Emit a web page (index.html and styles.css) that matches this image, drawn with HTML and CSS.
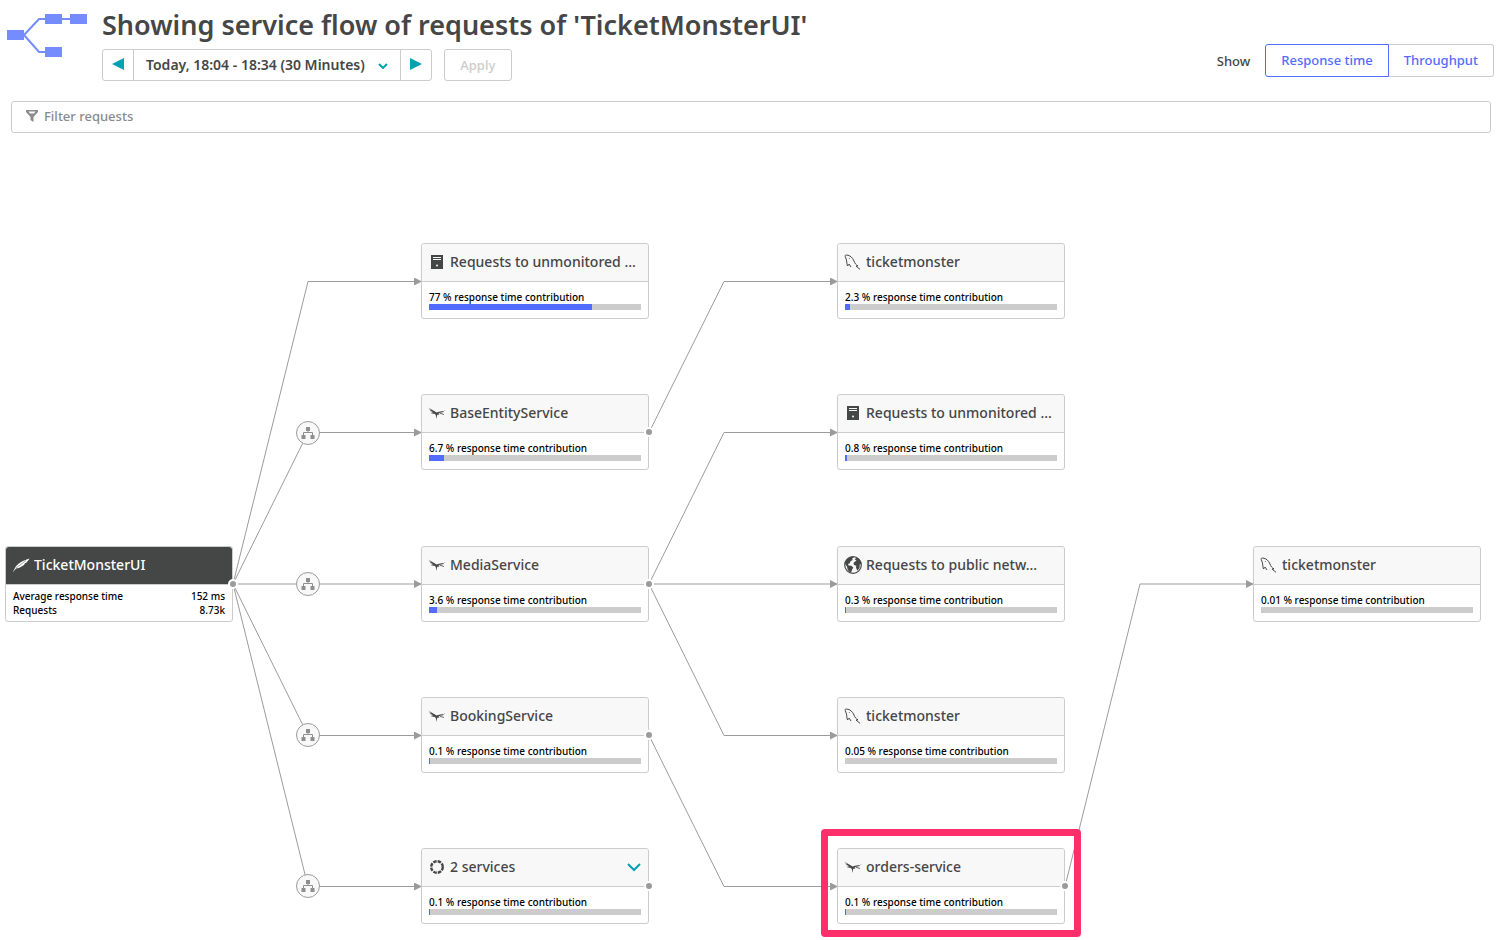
FILE: index.html
```html
<!DOCTYPE html>
<html lang="en">
<head>
<meta charset="utf-8">
<title>Service flow</title>
<link rel="stylesheet" href="styles.css">
</head>
<body>
<svg class="sprite" aria-hidden="true">
  <symbol id="i-server" viewBox="0 0 18 18"><path fill="#454646" d="M3 2h12v14H3z"/><path stroke="#f8f8f8" d="M5 4.500h8M5 6.500h8"/><circle cx="9" cy="12.500" r="1" fill="#f8f8f8"/></symbol>
  <symbol id="i-bird" viewBox="0 0 18 18"><path fill="#454646" d="M0 3.500L7 7.500l1.500 1L11 7.800l7-1.300-3.500 1.300 1.500.3-4 .7-1.500 1 1 1.200-1.700-.6-.8 1-.5 3.600L7.800 11 6.500 9.800 2.500 10l3-.9L2 7.800l2.700.1L.8 5.500l2.400.6z"/><path stroke="#454646" stroke-width=".8" d="M12 9.300l4 1.200"/></symbol>
  <symbol id="i-dolphin" viewBox="0 0 18 18"><path fill="none" stroke="#454646" stroke-width="1" d="M3.500 13C2.500 10 3 7.500 1.800 5 .8 3 1 1.800 2.500 2c3.500.2 6 2.500 7.500 6 1 2.500 1.600 3.700 4 4.800l-2 .3 4 3.200M3.500 13l1.600-1.900L7 14M5 5l.5.700"/></symbol>
  <symbol id="i-globe" viewBox="0 0 18 18"><circle cx="9" cy="9" r="8.300" fill="#f8f8f8" stroke="#454646" stroke-width="1.200"/><path fill="#454646" d="M1 7.500C1.500 4 4.500 1.200 8 .8l2 .4-2 1.500.8 1.200-2.300 1.300-.7 2L4 8l.6 1.500 2.700.3 2 1.700-1 1.700-1.300 3.500C4 15.500 3 12.500 3.200 11zM10.500 3l3-1.200c2 1.200 3.700 3.700 3.800 6.700l-1.500-.5-.3 4-2.200 2.700-1.300-3.200.3-1.800-2.300-.6-.5-2L11 5.500l1.500-.7z"/></symbol>
  <symbol id="i-ring" viewBox="0 0 18 18"><circle cx="9" cy="9" r="5.800" fill="none" stroke="#454646" stroke-width="2.400" stroke-dasharray="3.500 1.055"/></symbol>
  <symbol id="i-feather" viewBox="0 0 18 18"><path fill="#fff" d="M.5 16.500L3 12C5 8 9.500 5 17.500 2.500c-1 1.500-2 3-3.700 4.500l-1.300.2.500.5c-2 2.300-5 4.300-9 4.800z"/><path stroke="#454646" stroke-width=".5" fill="none" d="M4 12l10-7.500"/></symbol>
</svg>

<header class="top">
  <svg class="logo" viewBox="0 0 82 46" aria-hidden="true"><path fill="none" stroke="#748cff" stroke-width="2" d="M17 22L32 6h40M17 22l15 17h12"/><path fill="#748cff" d="M0 17h17v10H0zM38 1h17v10H38zM63 1h17v10H63zM38 34h17v10H38z"/></svg>
  <div class="heading">
    <h1>Showing service flow of requests of 'TicketMonsterUI'</h1>
    <div class="controls">
      <div class="timeframe">
        <button type="button" aria-label="Previous timeframe"><svg width="12" height="12"><path d="M12 0v12L0 6z"/></svg></button>
        <button type="button" class="range">Today, 18:04 - 18:34 (30 Minutes)<svg class="chev" width="10" height="6" viewBox="0 0 10 6"><path d="M1 1l4 4 4-4"/></svg></button>
        <button type="button" aria-label="Next timeframe"><svg width="12" height="12"><path d="M0 0v12l12-6z"/></svg></button>
      </div>
      <button type="button" class="apply" disabled>Apply</button>
    </div>
  </div>
  <div class="show">
    <span>Show</span>
    <div class="switch"><button type="button" class="on">Response time</button><button type="button">Throughput</button></div>
  </div>
</header>

<label class="filter">
  <svg width="12" height="12" viewBox="0 0 12 12" aria-hidden="true"><path fill="#8a8a8a" fill-rule="evenodd" d="M0 0h12v2L7.500 7v5l-3-2V7L0 2zM2.500 1.500L4 3.500h4l1.500-2z"/></svg>
  <input type="text" placeholder="Filter requests" aria-label="Filter requests">
</label>

<main class="canvas" id="canvas">
  <svg class="edges" viewBox="0 133 1506 807" aria-hidden="true">
    <defs>
      <marker id="arrow" viewBox="0 0 8 8" refX="8" refY="4" markerWidth="8" markerHeight="8" markerUnits="userSpaceOnUse" orient="auto"><path fill="#9b9b9b" d="M0 0l8 4-8 4z"/></marker>
    </defs>
    <g fill="none" stroke="#9b9b9b" class="wires">
      <path d="M233 584L308 281.500H422"/>
      <path d="M233 584L308 432.500H422"/>
      <path d="M233 584H422"/>
      <path d="M233 584L308 735.500H422"/>
      <path d="M233 584L308 886.500H422"/>
      <path d="M649 432.500L724 281.500H838"/>
      <path d="M649 584L724 432.500H838"/>
      <path d="M649 584H838"/>
      <path d="M649 584L724 735.500H838"/>
      <path d="M649 735.500L724 886.500H838"/>
      <path d="M1065 886.500L1140 584H1254"/>
    </g>
    <g>
      <g id="hub" transform="translate(308 433)"><circle r="11.500" fill="#f8f8f8" stroke="#9b9b9b"/><path fill="#8e8e8e" d="M-2-6h4v4h-4zM-6.500 2h4v4h-4zM2.500 2h4v4h-4z"/><path fill="none" stroke="#8e8e8e" d="M0-2V0M-4.500 2V-.5h9V2"/></g>
      <use href="#hub" y="151"/><use href="#hub" y="302"/><use href="#hub" y="453"/>
    </g>
  </svg>
</main>
<script src="flow.js"></script>
</body>
</html>
```
FILE: styles.css
```css
* { box-sizing: border-box; }
body {
  margin: 0;
  min-height: 100vh;
  display: flex;
  flex-direction: column;
  background: #fff;
  color: #454646;
  font-family: "Noto Sans", "Open Sans", sans-serif;
  font-size: 13px;
  font-weight: 500;
}
button, input { font: inherit; color: inherit; }
button { cursor: pointer; }
.sprite { position: absolute; width: 0; height: 0; }

.top { display: flex; padding: 8px 12px 0 7px; }
.logo { width: 82px; height: 46px; margin: 5px 13px 0 0; flex: none; }
.heading { flex: 1; }
h1 { margin: 0; font-size: 27px; line-height: 34px; font-weight: 600; white-space: nowrap; }
.controls { display: flex; gap: 12px; margin-top: 7px; }
.timeframe { display: flex; }
.timeframe button, .apply {
  height: 32px;
  border: 1px solid #ccc;
  background: #fff;
  padding: 0 10px;
  border-radius: 3px;
}
.timeframe button { display: flex; align-items: center; justify-content: center; width: 32px; padding: 0 0 2px; fill: #00a1b2; }
.timeframe .range { width: auto; margin: 0 -1px; padding: 0 12px 2px; gap: 13px; border-radius: 0; font-weight: 600; font-size: 14px; }
.timeframe button:first-child { border-radius: 3px 0 0 3px; }
.timeframe button:last-child { border-radius: 0 3px 3px 0; }
.chev { fill: none; stroke: #00a1b2; stroke-width: 2; margin-top: 3px; }
.apply { width: 68px; color: #ccc; }
.show { display: flex; align-items: center; align-self: flex-start; gap: 15px; margin-top: 36px; }
.switch { display: flex; }
.switch button { height: 33px; padding: 0 15px 1px; border: 1px solid #ccc; background: #fff; color: #526cff; border-radius: 0 3px 3px 0; border-left: 0; }
.switch .on { border: 1px solid #526cff; border-radius: 3px 0 0 3px; }

.filter { display: flex; align-items: center; gap: 6px; height: 32px; margin: 20px 15px 0 11px; padding: 0 14px 2px; border: 1px solid #ccc; border-radius: 3px; }
.filter input { flex: 1; border: 0; padding: 0; outline: 0; background: none; }
.filter input::placeholder { color: #8a8a8a; opacity: 1; }

.canvas { position: relative; flex: 1; min-height: 807px; overflow: hidden; }
.edges { position: absolute; left: 0; top: 0; width: 1506px; height: 807px; }
.wires path { marker-end: url(#arrow); }
.node { position: absolute; width: 228px; border: 1px solid #ccc; border-radius: 3px; background: #fff; color: #000; font-size: 10px; }
.node h2 { display: flex; align-items: center; gap: 4px; height: 38px; margin: 0; padding: 0 10px 2px 6px; border-bottom: 1px solid #ccc; background: #f8f8f8; color: #454646; font-size: 14px; font-weight: 500; border-radius: 3px 3px 0 0; }
.node h2 svg { flex: none; width: 18px; height: 18px; }
.node h2 span { flex: 1; white-space: nowrap; }
.node .expand { border: 0; padding: 0; background: none; display: flex; margin-right: -4px; }
.node .expand svg { width: 16px; height: 10px; fill: none; stroke: #00a1b2; stroke-width: 2; }
.body { height: 36px; padding: 8px 7px 0; line-height: 14px; }
.bar { height: 6px; background: #ccc; }
.bar i { display: block; height: 6px; background: #526cff; }
.root h2 { background: #454646; color: #fff; }
.root .body { padding-top: 4px; }
.row { display: flex; justify-content: space-between; }
.dot { position: absolute; right: -6px; top: 32px; width: 10px; height: 10px; border: 2px solid #fff; border-radius: 50%; background: #9b9b9b; }
.focus { position: absolute; left: 821px; top: 696px; width: 260px; height: 108px; border: 7px solid #ff2f6c; border-radius: 4px; }
```
FILE: flow.js
```js
const COLUMNS = [5, 421, 837, 1253];
const ROWS = [110, 261, 413, 564, 715];
const nodes = [
  { col: 0, row: 2, icon: 'feather', name: 'TicketMonsterUI', root: true, out: true },
  { col: 1, row: 0, icon: 'server', name: 'Requests to unmonitored ...', share: '77', width: 77 },
  { col: 1, row: 1, icon: 'bird', name: 'BaseEntityService', share: '6.7', width: 7, out: true },
  { col: 1, row: 2, icon: 'bird', name: 'MediaService', share: '3.6', width: 3.6, out: true },
  { col: 1, row: 3, icon: 'bird', name: 'BookingService', share: '0.1', width: 0.1, out: true },
  { col: 1, row: 4, icon: 'ring', name: '2 services', share: '0.1', width: 0.1, out: true, expand: true },
  { col: 2, row: 0, icon: 'dolphin', name: 'ticketmonster', share: '2.3', width: 2.3 },
  { col: 2, row: 1, icon: 'server', name: 'Requests to unmonitored ...', share: '0.8', width: 0.8 },
  { col: 2, row: 2, icon: 'globe', name: 'Requests to public netw...', share: '0.3', width: 0.3 },
  { col: 2, row: 3, icon: 'dolphin', name: 'ticketmonster', share: '0.05', width: 0 },
  { col: 2, row: 4, icon: 'bird', name: 'orders-service', share: '0.1', width: 0.1, out: true },
  { col: 3, row: 2, icon: 'dolphin', name: 'ticketmonster', share: '0.01', width: 0 },
];
const canvas = document.getElementById('canvas');
for (const n of nodes) {
  const body = n.root
    ? '<div class="row"><span>Average response time</span><span>152 ms</span></div><div class="row"><span>Requests</span><span>8.73k</span></div>'
    : `<div>${n.share} % response time contribution</div><div class="bar"><i style="width:${n.width}%"></i></div>`;
  const expand = n.expand
    ? '<button type="button" class="expand" aria-label="Expand services"><svg viewBox="0 0 16 10"><path d="M2 2l6 6 6-6"/></svg></button>' : '';
  canvas.insertAdjacentHTML('beforeend',
    `<section class="node${n.root ? ' root' : ''}" style="left:${COLUMNS[n.col]}px;top:${ROWS[n.row]}px">
      <h2><svg><use href="#i-${n.icon}"/></svg><span>${n.name}</span>${expand}</h2>
      <div class="body">${body}</div>${n.out ? '<b class="dot"></b>' : ''}
    </section>`);
}
canvas.insertAdjacentHTML('beforeend', '<div class="focus"></div>');
```
